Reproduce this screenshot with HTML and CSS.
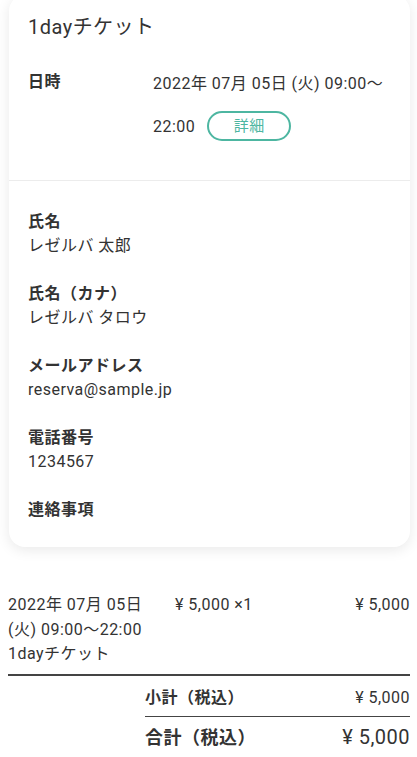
FILE: index.html
```html
<!DOCTYPE html>
<html lang="ja">
<head>
<meta charset="utf-8">
<title>予約確認</title>
<link rel="stylesheet" href="styles.css">
</head>
<body>
<div class="page">
  <section class="card">
    <div class="card-top">
      <h1 class="title">1dayチケット</h1>
      <div class="dt-row">
        <div class="dt-label">日時</div>
        <div class="dt-value"><span class="dt-line">2022年 07月 05日 (火) 09:00〜</span><span class="dt-line">22:00<button class="detail-btn" type="button">詳細</button></span></div>
      </div>
    </div>
    <div class="card-body">
      <div class="field">
        <div class="field-label">氏名</div>
        <div class="field-value">レゼルバ 太郎</div>
      </div>
      <div class="field">
        <div class="field-label">氏名（カナ）</div>
        <div class="field-value">レゼルバ タロウ</div>
      </div>
      <div class="field">
        <div class="field-label">メールアドレス</div>
        <div class="field-value">reserva@sample.jp</div>
      </div>
      <div class="field">
        <div class="field-label">電話番号</div>
        <div class="field-value">1234567</div>
      </div>
      <div class="field">
        <div class="field-label">連絡事項</div>
        <div class="field-value"></div>
      </div>
    </div>
  </section>

  <section class="summary">
    <div class="item-row">
      <div class="item-name">2022年 07月 05日<br>(火) 09:00〜22:00<br>1dayチケット</div>
      <div class="item-price">¥ 5,000 ×1</div>
      <div class="item-amount">¥ 5,000</div>
    </div>
    <div class="subtotal-row">
      <div class="sum-label">小計（税込）</div>
      <div class="sum-amount">¥ 5,000</div>
    </div>
    <div class="total-row">
      <div class="total-label">合計（税込）</div>
      <div class="total-amount">¥ 5,000</div>
    </div>
  </section>
</div>
</body>
</html>
```
FILE: styles.css
```css
* { box-sizing: border-box; }
html, body {
  margin: 0;
  padding: 0;
  background: #fff;
}
body {
  font-family: "Roboto", "Noto Sans CJK JP", sans-serif;
  color: #333;
  font-size: 16px;
  letter-spacing: 0.03em;
  overflow: hidden;
}
.page {
  padding: 0 7px 0 8px;
}
.card {
  margin: -5px 0 0 1px;
  background: #fff;
  border-radius: 16px;
  box-shadow: 0 3px 14px rgba(0, 0, 0, 0.09);
}
.card-top {
  padding: 18px 20px 32px 19px;
  border-bottom: 1px solid #ececec;
}
.title {
  margin: 0;
  font-size: 20px;
  line-height: 28px;
  font-weight: 400;
}
.dt-row {
  display: flex;
  margin-top: 19px;
}
.dt-label {
  width: 125px;
  flex: none;
  font-weight: 700;
  line-height: 44px;
}
.dt-value {
  flex: 1;
  display: flex;
  flex-direction: column;
}
.dt-line {
  display: flex;
  align-items: center;
  height: 44px;
  white-space: nowrap;
}
.detail-btn {
  display: inline-flex;
  align-items: center;
  justify-content: center;
  margin-left: 12px;
  width: 84px;
  height: 30px;
  padding: 0;
  border: 2px solid #4db6a1;
  border-radius: 16px;
  background: #fff;
  color: #4db6a1;
  font-family: "Roboto", "Noto Sans CJK JP", sans-serif;
  font-size: 15px;
  letter-spacing: 0.03em;
  line-height: 1;
}
.card-body {
  padding: 29px 20px 25px 19px;
  display: flex;
  flex-direction: column;
  gap: 24px;
}
.field-label {
  font-weight: 700;
  line-height: 24px;
}
.field-value {
  line-height: 24px;
}
.field-value:empty {
  display: none;
}
.summary {
  margin-top: 46px;
}
.item-row {
  display: grid;
  grid-template-columns: 167px 1fr auto;
  line-height: 24.5px;
  padding-bottom: 7px;
  border-bottom: 2px solid #444;
}
.item-amount {
  text-align: right;
}
.subtotal-row {
  margin-left: 137px;
  display: flex;
  justify-content: space-between;
  line-height: 24px;
  padding: 10px 0 6px;
  border-bottom: 1px solid #444;
}
.sum-label {
  font-weight: 700;
}
.total-row {
  margin-left: 137px;
  display: flex;
  justify-content: space-between;
  align-items: baseline;
  padding-top: 6px;
  line-height: 28px;
}
.total-label {
  font-size: 18px;
  font-weight: 700;
}
.total-amount {
  font-size: 20px;
}
```
